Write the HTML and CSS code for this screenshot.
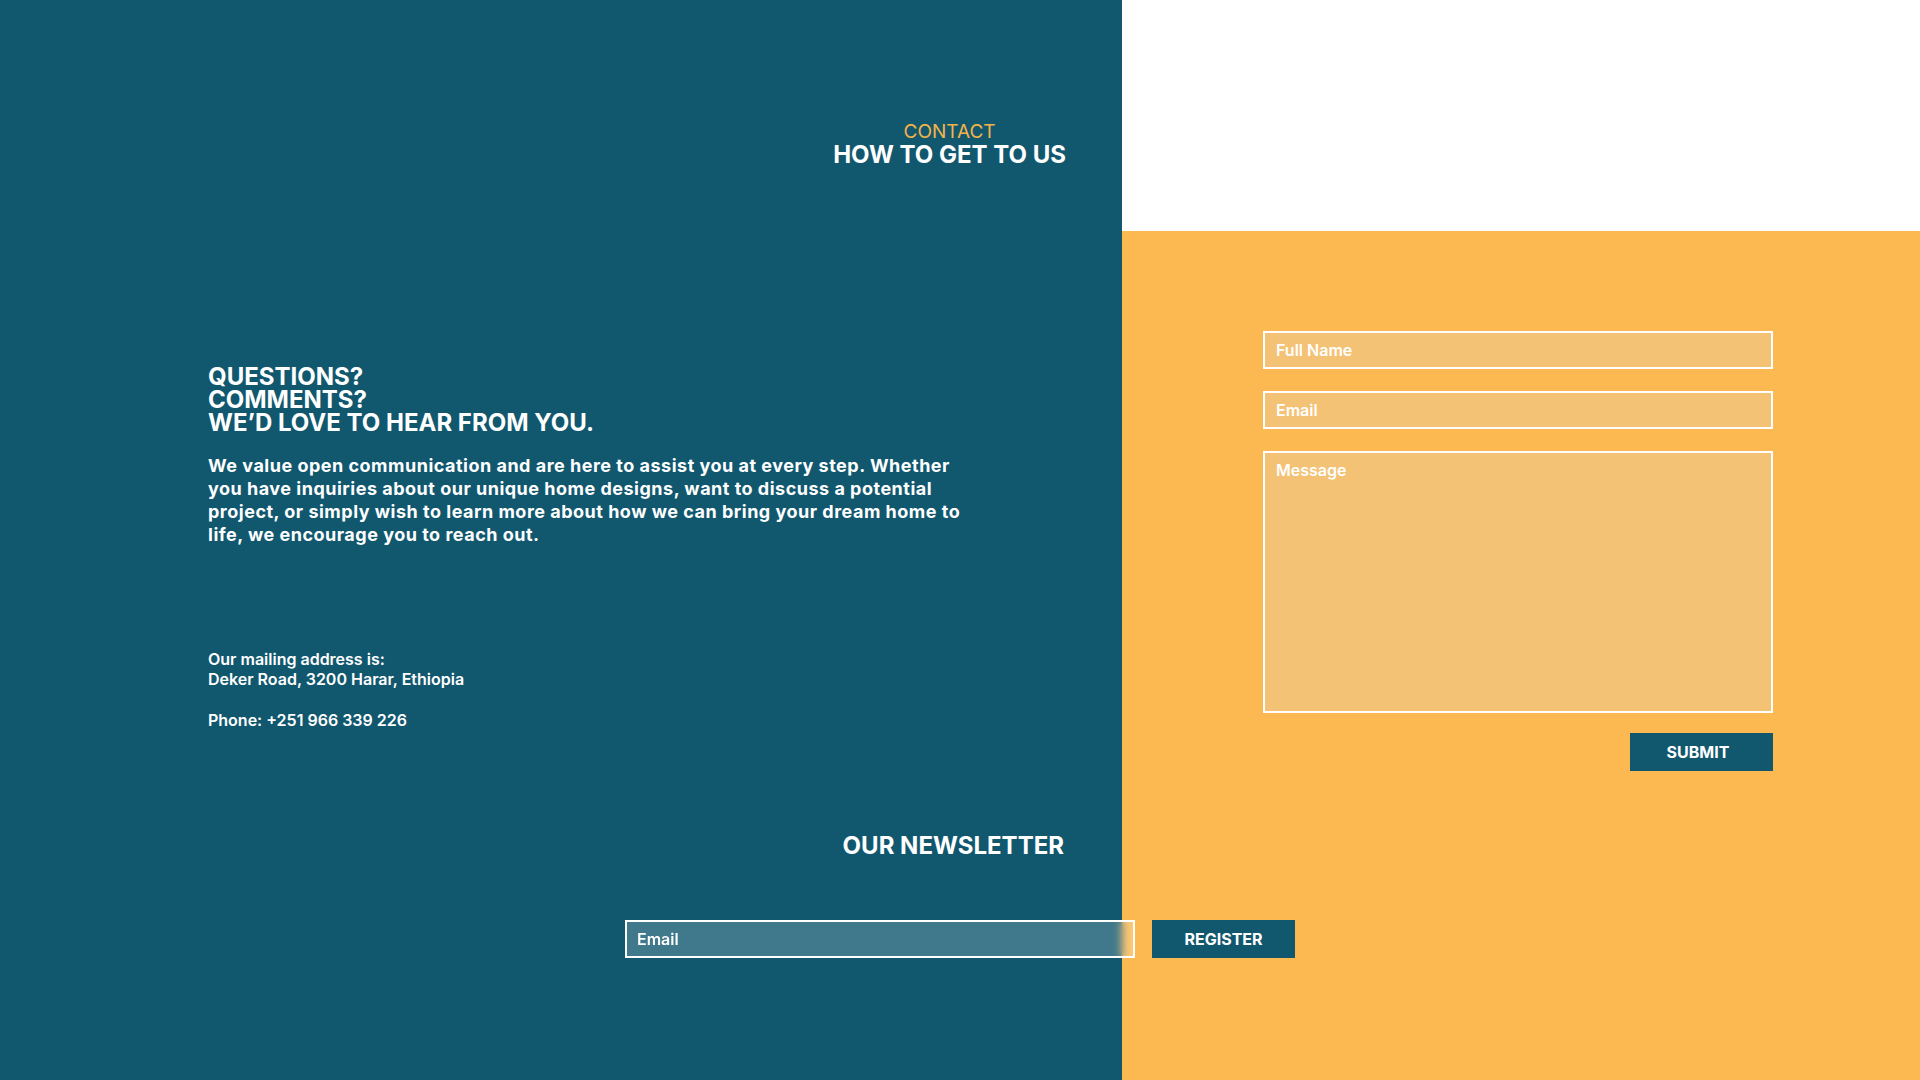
FILE: index.html
```html
<!DOCTYPE html>
<html lang="en">
<head>
<meta charset="utf-8">
<title>Contact</title>
<link rel="stylesheet" href="styles.css">
</head>
<body>
<main class="page">
  <section class="contact">
    <div class="contact-left">
      <header class="section-head">
        <div class="head-box">
          <p class="eyebrow">CONTACT</p>
          <h1 class="title">HOW TO GET TO US</h1>
        </div>
      </header>
      <div class="intro">
        <h2 class="questions">QUESTIONS?<br>COMMENTS?<br>WE’D LOVE TO HEAR FROM YOU.</h2>
        <p class="lead">We value open communication and are here to assist you at every step. Whether you have inquiries about our unique home designs, want to discuss a potential project, or simply wish to learn more about how we can bring your dream home to life, we encourage you to reach out.</p>
      </div>
      <div class="address">
        <p>Our mailing address is:<br>Deker Road, 3200 Harar, Ethiopia</p>
        <p>Phone: +251 966 339 226</p>
      </div>
    </div>
    <div class="contact-right">
      <form class="contact-form">
        <input class="field" type="text" placeholder="Full Name">
        <input class="field" type="email" placeholder="Email">
        <textarea class="field field-message" placeholder="Message"></textarea>
        <button class="btn btn-submit" type="button">SUBMIT</button>
      </form>
    </div>
  </section>
  <section class="newsletter">
    <div class="newsletter-head">
      <h2 class="title">OUR NEWSLETTER</h2>
    </div>
    <form class="newsletter-form">
      <input class="field field-news" type="email" placeholder="Email">
      <button class="btn" type="button">REGISTER</button>
    </form>
  </section>
</main>
</body>
</html>
```
FILE: styles.css
```css
html, body {
  margin: 0;
  padding: 0;
}

body {
  font-family: Inter, "Noto Sans", "Liberation Sans", sans-serif;
}

.page {
  width: 1920px;
  height: 1080px;
  overflow: hidden;
  background:
    linear-gradient(to right, #11586f 0, #11586f 1122px, transparent 1122px),
    linear-gradient(to bottom, #ffffff 0, #ffffff 231px, #fdb951 231px);
}

.contact {
  display: flex;
  align-items: flex-start;
}

.contact-left {
  flex: none;
  width: 1122px;
}

.section-head {
  display: flex;
  justify-content: flex-end;
  padding: 120px 56px 0 0;
}

.head-box {
  text-align: center;
}

.eyebrow {
  margin: 0;
  font-size: 19px;
  line-height: 23px;
  font-weight: 400;
  color: #f5b347;
}

.title {
  margin: 0;
  font-size: 24px;
  line-height: 24px;
  font-weight: 700;
  color: #ffffff;
}

.intro {
  margin-top: 198px;
  padding-left: 208px;
}

.questions {
  margin: 0;
  font-size: 24px;
  line-height: 23px;
  font-weight: 700;
  color: #ffffff;
}

.lead {
  margin: 20px 0 0;
  width: 764px;
  font-size: 18px;
  line-height: 23px;
  font-weight: 700;
  letter-spacing: 0.5px;
  color: #ffffff;
}

.address {
  margin-top: 103px;
  padding-left: 208px;
  color: #ffffff;
  font-size: 16px;
  line-height: 20px;
  font-weight: 600;
}

.address p {
  margin: 0;
}

.address p + p {
  margin-top: 21px;
}

.contact-right {
  flex: 1;
  padding: 331px 147px 0 141px;
}

.contact-form {
  display: flex;
  flex-direction: column;
  gap: 22px;
}

.field {
  box-sizing: border-box;
  height: 38px;
  margin: 0;
  border: 2px solid #ffffff;
  border-radius: 0;
  background: #f4c274;
  padding: 0 11px;
  font-family: inherit;
  font-size: 16px;
  font-weight: 600;
  color: #ffffff;
  outline: none;
}

.field::placeholder {
  color: #ffffff;
  opacity: 1;
}

.field-message {
  height: 262px;
  padding-top: 7px;
  resize: none;
  line-height: normal;
}

.btn {
  box-sizing: border-box;
  width: 143px;
  height: 38px;
  border: 0;
  border-radius: 0;
  background: #11586f;
  color: #ffffff;
  font-family: inherit;
  font-size: 16px;
  font-weight: 700;
  padding: 0;
}

.btn-submit {
  align-self: flex-end;
  margin-top: -2px;
  padding-right: 7px;
}

.newsletter-head {
  box-sizing: border-box;
  width: 1122px;
  display: flex;
  justify-content: flex-end;
  padding-right: 58px;
  margin-top: 63px;
}

.newsletter-form {
  display: flex;
  justify-content: center;
  gap: 17px;
  margin-top: 62px;
}

.field-news {
  width: 510px;
  padding-left: 10px;
  background: rgba(255, 255, 255, 0.2);
  backdrop-filter: blur(4px);
}
```
